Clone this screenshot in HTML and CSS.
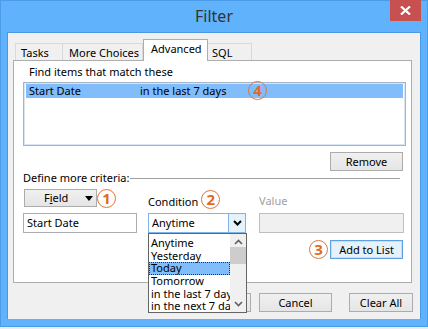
FILE: index.html
```html
<!DOCTYPE html>
<html lang="en">

<head>
    <meta charset="UTF-8">
    <title>Filter</title>
    <link rel="stylesheet" href="styles.css">
</head>

<body>
    <div class="window">
        <div class="titlebar">
            <span></span>
            <span class="title">Filter</span>
            <span class="close">
                <svg width="11" height="9" viewBox="0 0 11 9">
                    <path d="M1 0.5 L10 8.5 M10 0.5 L1 8.5" stroke="#fff" stroke-width="2.2" />
                </svg>
            </span>
        </div>

        <div class="client">
            <div class="tabs">
                <div class="tab tab-tasks">Tasks</div>
                <div class="tab tab-more">More Choices</div>
                <div class="tab tab-adv selected">Advanced</div>
                <div class="tab tab-sql">SQL</div>
            </div>

            <div class="panel">
                <div class="find-label">Find items that match these</div>
                <div class="listbox">
                    <div class="list-row active">
                        <span class="col-field">Start Date</span>
                        <span class="col-cond">in the last 7 days</span>
                        <span class="badge badge-4">4</span>
                    </div>
                </div>

                <div class="remove-row">
                    <button class="btn">Remove</button>
                </div>

                <div class="criteria">
                    <span>Define more criteria:</span>
                    <span class="rule"></span>
                </div>

                <div class="form">
                    <div class="cell field-cell">
                        <button class="btn field-btn">F<u>i</u>eld <span class="tri"></span></button>
                        <span class="badge">1</span>
                    </div>
                    <div class="cell label-cell">
                        <span>Condition</span>
                        <span class="badge">2</span>
                    </div>
                    <div class="cell label-cell disabled">Value</div>

                    <div class="cell">
                        <div class="textbox">Start Date</div>
                    </div>
                    <div class="cell combo-cell">
                        <div class="combo">
                            <span>Anytime</span>
                            <span class="combo-btn">
                                <svg width="9" height="6" viewBox="0 0 9 6">
                                    <path d="M1 1 L4.5 4.5 L8 1" stroke="#000" stroke-width="2" fill="none" />
                                </svg>
                            </span>
                        </div>
                        <div class="dropdown">
                            <div class="options">
                                <div class="option">Anytime</div>
                                <div class="option">Yesterday</div>
                                <div class="option current">Today</div>
                                <div class="option">Tomorrow</div>
                                <div class="option">in the last 7 days</div>
                                <div class="option">in the next 7 days</div>
                            </div>
                            <div class="scrollbar">
                                <svg width="9" height="6" viewBox="0 0 9 6">
                                    <path d="M1 5 L4.5 1.5 L8 5" stroke="#606060" stroke-width="1.6" fill="none" />
                                </svg>
                                <div class="thumb"></div>
                                <div class="track"></div>
                                <svg width="9" height="6" viewBox="0 0 9 6">
                                    <path d="M1 1 L4.5 4.5 L8 1" stroke="#606060" stroke-width="1.6" fill="none" />
                                </svg>
                            </div>
                        </div>
                    </div>
                    <div class="cell">
                        <div class="textbox off"></div>
                    </div>

                    <div class="cell add-cell">
                        <span class="badge">3</span>
                        <button class="btn btn-default">Add to List</button>
                    </div>
                </div>
            </div>

            <div class="actions">
                <!-- OK button sits under the open drop-down -->
                <button class="btn"></button>
                <button class="btn">Cancel</button>
                <button class="btn btn-clear">Clear All</button>
            </div>
        </div>
    </div>
</body>

</html>
```

FILE: styles.css
```css
html, body {
    margin: 0;
    padding: 0;
}

body {
    width: 428px;
    height: 329px;
    background: #ececec;
    font-family: "Noto Sans", "Open Sans", sans-serif;
    font-size: 11px;
    color: #000;
    overflow: hidden;
}

.window {
    width: 428px;
    height: 327px;
    background: #5fb2fb;
    box-sizing: border-box;
    border: 1px solid #4c9be8;
}

.titlebar {
    height: 31px;
    display: grid;
    grid-template-columns: 1fr auto 1fr;
}

.title {
    font-size: 16px;
    color: #333;
    line-height: 31px;
}

.close {
    justify-self: end;
    width: 31px;
    height: 21px;
    margin-top: -1px;
    margin-right: 6px;
    background: #c75050;
    display: flex;
    align-items: center;
    justify-content: center;
}

.client {
    margin: 0 6px 0 6px;
    height: 287px;
    background: #f0f0f0;
    box-sizing: border-box;
    border: 1px solid #4a98e3;
    border-bottom: none;
    padding-top: 6px;
}

/* tabs */

.tabs {
    display: flex;
    align-items: flex-end;
    margin-left: 7px;
    height: 21px;
    position: relative;
    z-index: 2;
}

.tab {
    height: 17px;
    box-sizing: border-box;
    border: 1px solid #d9d9d9;
    border-bottom: none;
    background: #f0f0f0;
    line-height: 17px;
    padding-left: 5px;
    white-space: nowrap;
}

.tab + .tab {
    border-left: none;
}

.tab-tasks {
    width: 48px;
}

.tab-more {
    width: 80px;
    padding-left: 6px;
}

.tab-adv {
    width: 65px;
}

.tab-sql {
    width: 44px;
    padding-left: 4px;
}

.tab.selected {
    height: 22px;
    margin-bottom: -1px;
    background: #fff;
    border: 1px solid #adadad;
    border-bottom: none;
    line-height: 18px;
    padding-left: 7px;
}

.panel {
    margin-left: 5px;
    width: 399px;
    height: 223px;
    box-sizing: border-box;
    border: 1px solid #adadad;
    background: #fff;
    position: relative;
    z-index: 1;
}

.find-label {
    margin: 4px 0 0 15px;
    line-height: 14px;
}

.listbox {
    margin: 3px 0 0 9px;
    width: 383px;
    height: 64px;
    box-sizing: border-box;
    border: 1px solid #a9b4c2;
    box-shadow: inset 0 0 0 1px #d8e6f4;
    padding: 1px 2px;
}

.list-row {
    height: 14px;
    line-height: 14px;
    display: flex;
    align-items: center;
    position: relative;
    padding-left: 3px;
}

.list-row.active {
    background: #80bdfa;
}

.col-field {
    width: 111px;
}

/* numbered call-outs */

.badge {
    width: 17px;
    height: 17px;
    border: 1.5px solid #e2743a;
    border-radius: 50%;
    color: #e06a25;
    font-weight: bold;
    font-size: 15px;
    line-height: 17px;
    text-align: center;
    display: inline-block;
    flex-shrink: 0;
}

.badge-4 {
    position: absolute;
    left: 222px;
    top: -3px;
}

/* buttons */

.btn {
    font-family: "Noto Sans", "Open Sans", sans-serif;
    font-size: 11px;
    color: #000;
    background: linear-gradient(#f0f0f0, #e5e5e5);
    border: 1px solid #acacac;
    border-radius: 0;
    height: 19px;
    width: 73px;
    padding: 0;
    line-height: 16px;
    margin: 0;
}

.btn-default {
    border-color: #5fa1e0;
    background: #e5f1fb;
    box-shadow: inset 0 0 0 1px #c6dff6;
}

.remove-row {
    display: flex;
    justify-content: flex-end;
    margin: 6px 8px 0 0;
}

.criteria {
    display: flex;
    align-items: center;
    margin: 0 11px 0 9px;
    height: 13px;
    line-height: 13px;
}

.rule {
    flex: 1;
    border-top: 1px solid #a0a0a0;
    margin-left: 1px;
    margin-top: 1px;
}

/* criteria form */

.form {
    display: grid;
    grid-template-columns: 125px 111px 145px;
    grid-template-rows: 24px 20px 26px;
    margin: 5px 0 0 9px;
}

.cell {
    display: flex;
    align-items: flex-start;
    position: relative;
}

.field-cell {
    padding-left: 1px;
}

.field-btn {
    height: 18px;
    display: flex;
    align-items: center;
    padding-left: 19px;
}

.tri {
    width: 0;
    height: 0;
    border-left: 4.5px solid transparent;
    border-right: 4.5px solid transparent;
    border-top: 5px solid #000;
    margin-left: 17px;
}

.label-cell {
    align-items: center;
    padding-top: 0;
    gap: 3px;
}

.label-cell .badge {
    margin-top: -4px;
}

.disabled {
    color: #a0a0a0;
    padding-top: 2px;
    align-items: flex-start;
    line-height: 20px;
}

.textbox {
    width: 114px;
    height: 20px;
    box-sizing: border-box;
    border: 1px solid #abadb3;
    background: #fff;
    line-height: 18px;
    padding-left: 3px;
}

.textbox.off {
    width: 145px;
    background: #f0f0f0;
    border-color: #bfbfbf;
}

.combo {
    width: 98px;
    height: 20px;
    box-sizing: border-box;
    border: 1px solid #7eb4ea;
    display: flex;
    justify-content: space-between;
    line-height: 18px;
    padding-left: 3px;
}

.combo-btn {
    width: 16px;
    height: 18px;
    background: #e5f1fb;
    border-left: 1px solid #7eb4ea;
    display: flex;
    align-items: center;
    justify-content: center;
}

.dropdown {
    position: absolute;
    top: 20px;
    left: 0;
    width: 99px;
    height: 80px;
    box-sizing: border-box;
    border: 1px solid #646464;
    background: #fff;
    display: flex;
    z-index: 5;
}

.options {
    flex: 1;
    overflow: hidden;
    padding-top: 3px;
}

.option {
    height: 12.7px;
    line-height: 12.7px;
    white-space: nowrap;
    padding-left: 2px;
}

.option.current {
    background: #80bdfa;
    outline: 1px dotted #333;
    outline-offset: -1px;
}

.scrollbar {
    width: 16px;
    background: #f0f0f0;
    display: flex;
    flex-direction: column;
    align-items: center;
}

.scrollbar svg {
    margin: 5px 0;
    flex-shrink: 0;
}

.thumb {
    width: 16px;
    height: 17px;
    background: #cdcdcd;
    margin-top: -3px;
}

.track {
    flex: 1;
}

.add-cell {
    grid-column: 3;
    grid-row: 3;
    justify-content: flex-end;
    align-items: center;
    gap: 2px;
    padding-top: 7px;
    padding-right: 1px;
}

.add-cell .badge {
    margin-top: -1px;
}

/* dialog buttons */

.actions {
    display: flex;
    justify-content: flex-end;
    gap: 8px;
    margin: 10px 7px 0 0;
}

.btn-clear {
    margin-left: 9px;
    width: 64px;
}
```
